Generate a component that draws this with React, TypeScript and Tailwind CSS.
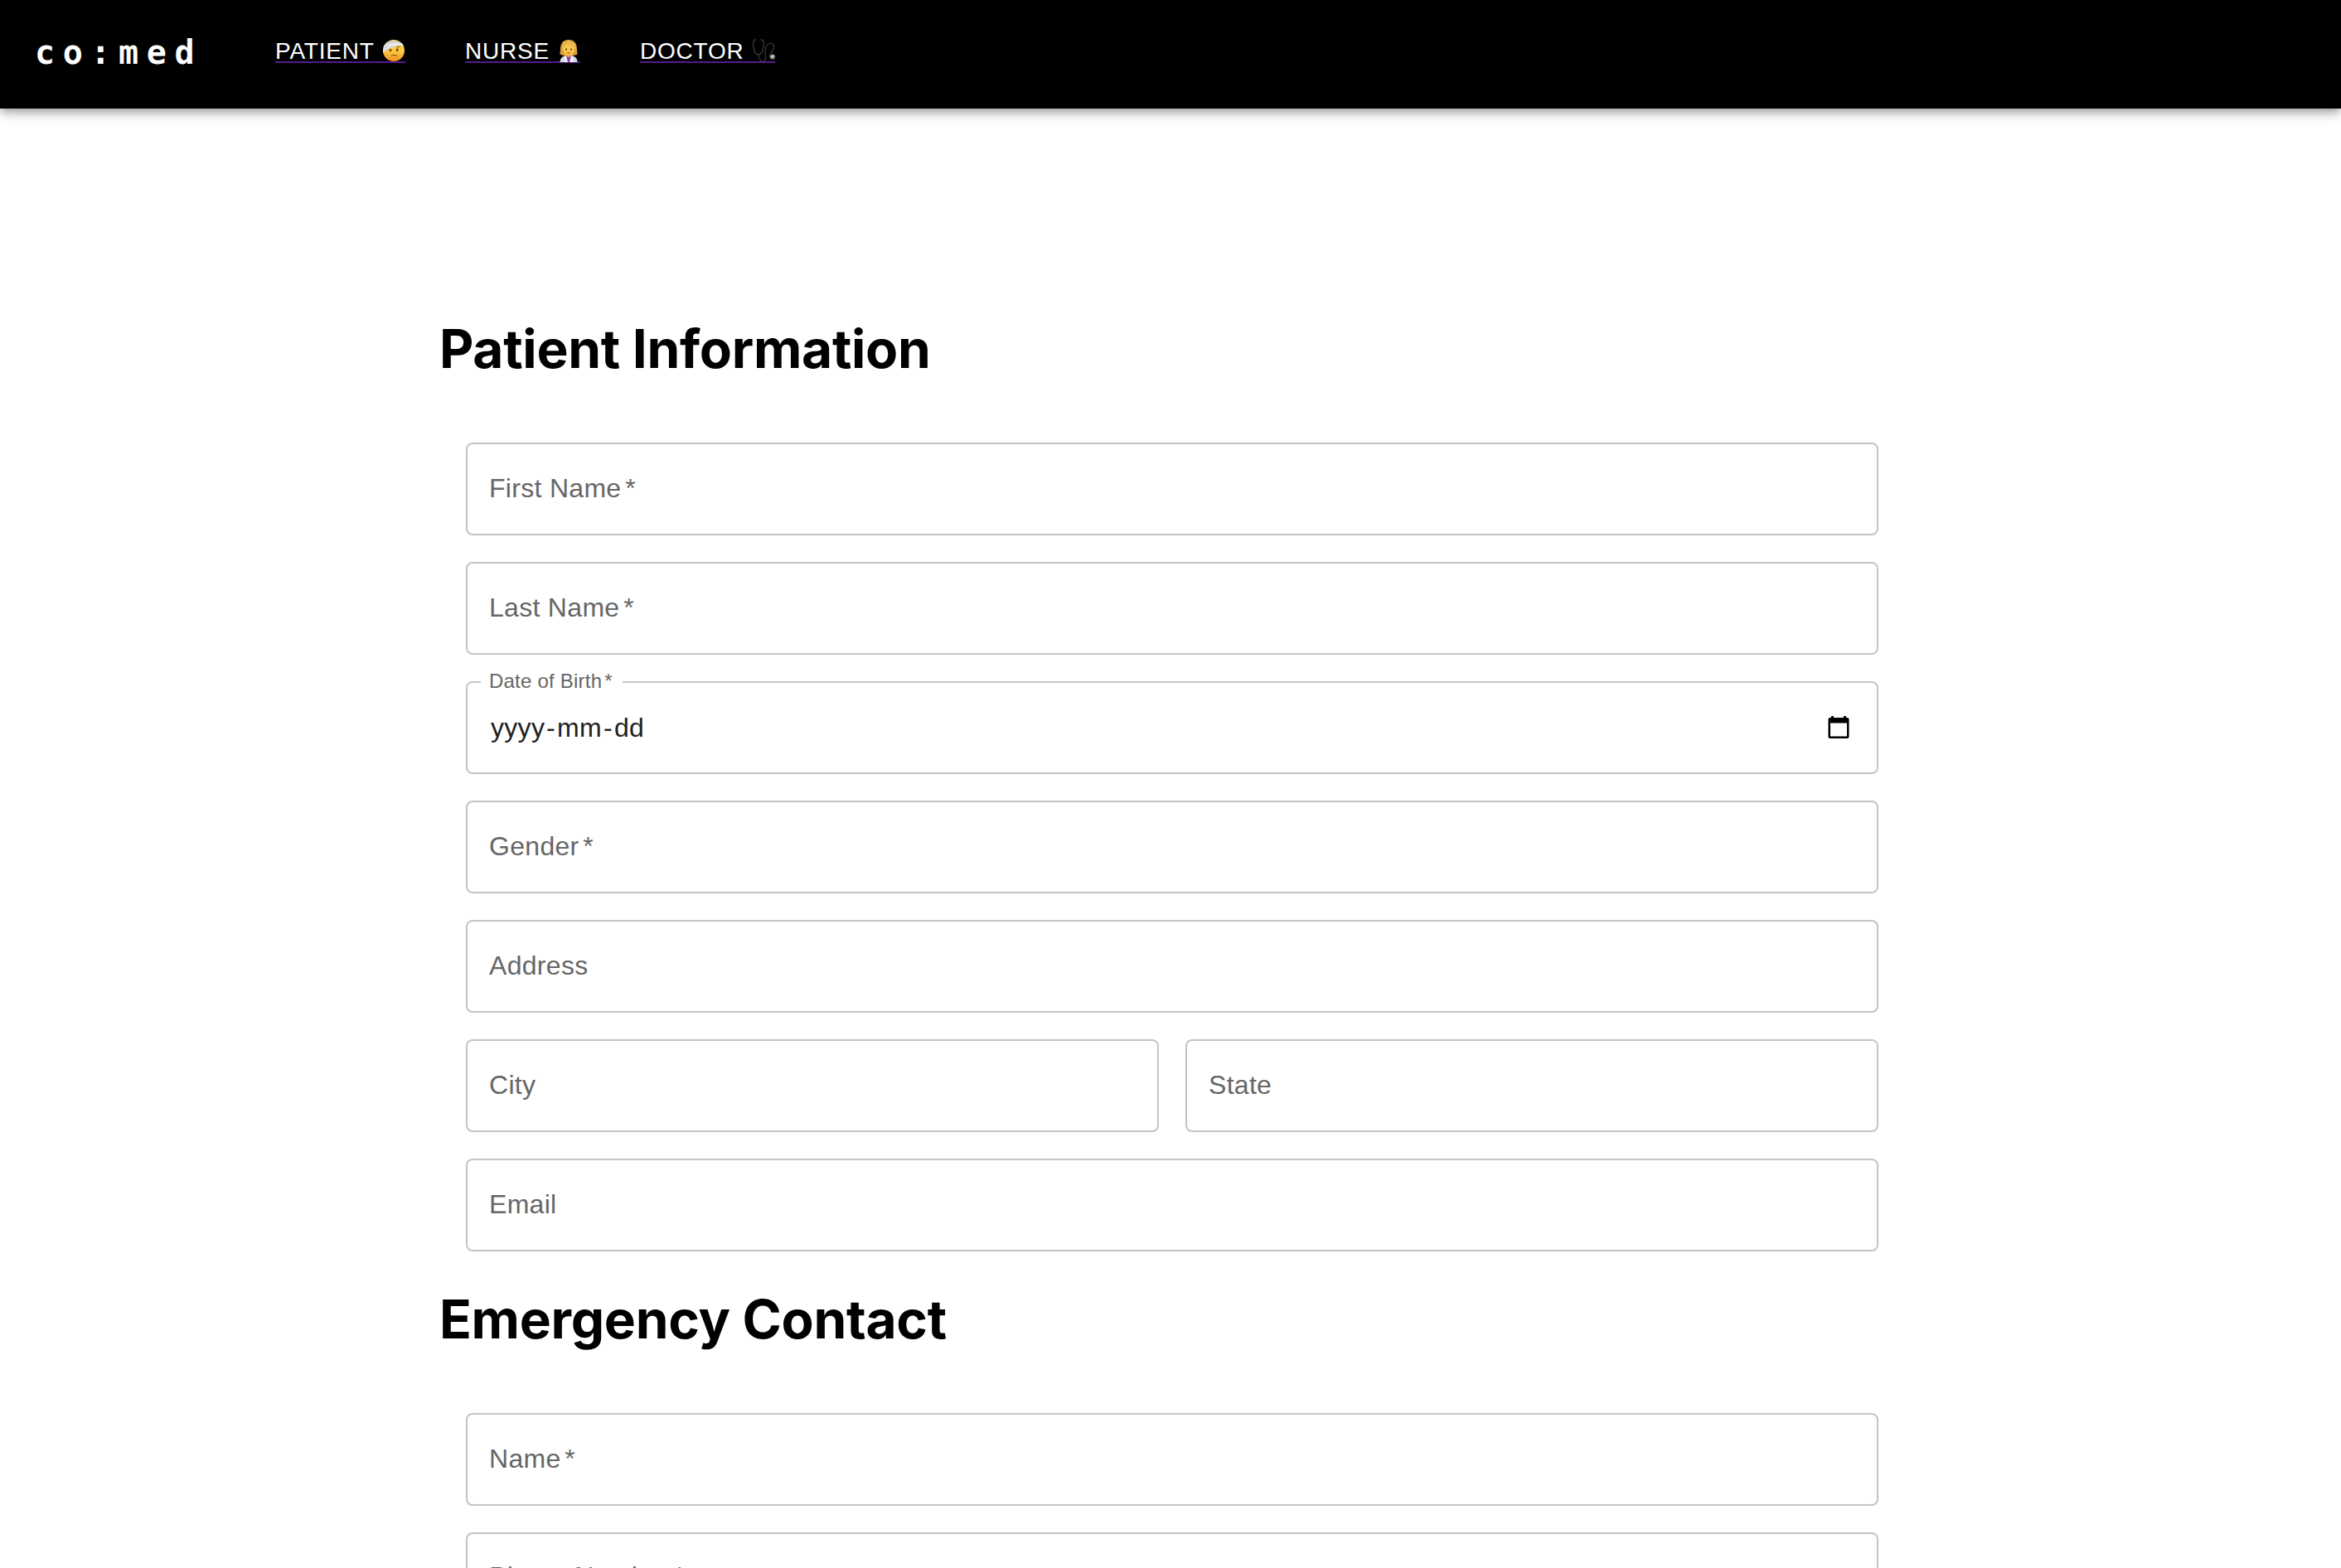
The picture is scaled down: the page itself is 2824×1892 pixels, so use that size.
import React from "react";

function Injured() {
  return (
    <svg viewBox="0 0 28 28" className="block h-7 w-7">
      <defs>
        <linearGradient id="face" x1="0" y1="0" x2="0" y2="1">
          <stop offset="0" stopColor="#ffe04d" />
          <stop offset="0.6" stopColor="#fcc23c" />
          <stop offset="1" stopColor="#ee8f1f" />
        </linearGradient>
        <clipPath id="head">
          <circle cx="14" cy="14" r="13" />
        </clipPath>
      </defs>
      <circle cx="14" cy="14" r="13" fill="url(#face)" />
      <g clipPath="url(#head)">
        <path d="M0 17 L0 6 L4 4 Q14 -1 26 6 L28 9 Q14 6 1 17Z" fill="#cfcfd2" />
        <path d="M2 9.500 Q14 3 27 7.500 M0 15 Q11 6 22 7" stroke="#ececef" strokeWidth="1.8" fill="none" />
      </g>
      <ellipse cx="10" cy="13.6" rx="1.3" ry="1.9" fill="#7a430f" />
      <ellipse cx="18.2" cy="13.2" rx="1.3" ry="1.9" fill="#7a430f" />
      <path d="M17 10.4 Q18.5 8.400 22 9.600" stroke="#8a4c10" strokeWidth="1" fill="none" />
      <path d="M10.8 20.6 Q14 18.4 18 20.4" stroke="#8a4c10" strokeWidth="1.1" fill="none" />
    </svg>
  );
}

function Nurse() {
  return (
    <svg viewBox="0 0 28 28" className="block h-7 w-7">
      <path d="M14 1 C6 1 4 7 4 13 L3.4 18.500 Q8 21 14 20 Q20 21 24.600 18.500 L24 13 C24 7 22 1 14 1Z" fill="#dda036" />
      <path d="M3.500 28 Q3.500 22 9 20.500 L19 20.500 Q24.500 22 24.500 28Z" fill="#d5dae2" />
      <path d="M10.500 20 L17.500 20 L18 28 L10 28Z" fill="#8534b4" />
      <path d="M9 20.500 L11 20 L13 28 L9 28 Z M19 20.500 L17 20 L15 28 L19 28Z" fill="#f1f3f7" />
      <path d="M11.5 17 h5 v3.600 l-2.500 2 l-2.500 -2Z" fill="#e5a338" />
      <path d="M7 11 C7 4 21 4 21 11 C21 16 18 19.600 14 19.600 C10 19.600 7 16 7 11Z" fill="#fbc94c" />
      <path d="M5.500 13 Q8 11 11 7 Q17 7.500 22.500 13 L22 6 L14 1.500 L7 4Z" fill="#eab750" />
      <circle cx="11" cy="12.600" r="1.1" fill="#5b3413" />
      <circle cx="17" cy="12.600" r="1.1" fill="#5b3413" />
      <path d="M11.8 16.400 Q14 17.800 16.2 16.400" stroke="#b4452c" strokeWidth="1" fill="none" />
    </svg>
  );
}

function Stethoscope() {
  return (
    <svg viewBox="0 0 28 28" className="block h-7 w-7 overflow-visible" fill="none" strokeLinecap="round">
      <path d="M4.500 0.800 L3 1.400 C0.500 3 1.500 9 3 14 Q4.500 18.800 8 18.800 Q11.500 18.800 13 14 C14.500 9 15.500 3 13 1.400 L11 0.800" stroke="#3a3a3e" strokeWidth="1.400" />
      <path d="M8 19 C8.500 29 17.500 29 16.500 22 C16 16 15.500 12 18 8 C21 3 27.500 5 26.500 11 C25.500 15 20 18 21.500 22.500 L23 23.500" stroke="#323235" strokeWidth="1.400" />
      <circle cx="25" cy="21.500" r="3" fill="#85888e" />
      <circle cx="24.700" cy="21" r="1.500" fill="#d0d3d8" />
    </svg>
  );
}

function NavLink({ text, icon, className }: { text: string; icon: React.ReactNode; className: string }) {
  return (
    <a className={"flex h-[32px] shrink-0 items-start justify-between border-b-2 border-[#551a8b] font-['Liberation_Sans',Arial,sans-serif] text-[28px] leading-[36px] tracking-[0.8px] text-white " + className}>
      <span className="whitespace-nowrap">{text}</span>
      <span className="pt-[3px]">{icon}</span>
    </a>
  );
}

function Star() {
  return <span className="-ml-0.5">{"\u2009*"}</span>;
}

function Field({ label, required, inset = "pb-[3px]" }: { label: string; required?: boolean; inset?: string }) {
  return (
    <div className={"flex h-28 min-w-0 flex-1 shrink-0 items-center rounded-lg border-2 border-[#c4c4c4] pl-[26px] text-[32px] leading-[46px] tracking-[0.3px] text-[#666666] " + inset}>
      <span className="whitespace-pre">{label}{required && <Star />}</span>
    </div>
  );
}

function Row({ children }: { children: React.ReactNode }) {
  return <div className="flex h-28 shrink-0 gap-8">{children}</div>;
}

function DateField() {
  return (
    <div className="relative flex h-28 flex-1 items-center justify-between rounded-lg border-2 border-[#c4c4c4] pr-[32px] pl-[28px]">
      <span className="absolute -top-[18px] left-[16px] flex h-8 w-[171px] items-center bg-white pl-[10px] text-2xl leading-8 tracking-[0.22px] whitespace-pre text-[#666666]">
        Date of Birth<Star />
      </span>
      <span className="flex text-[32px] leading-[46px] tracking-[0.3px] text-[#212121]">
        <span className="w-[67px]">yyyy</span>
        <span className="w-[13px]">-</span>
        <span className="w-[56px]">mm</span>
        <span className="w-[13px]">-</span>
        <span>dd</span>
      </span>
      <svg viewBox="0 0 28 30" className="mb-px h-[30px] w-7">
        <path fillRule="evenodd" d="M5 1h3v2h12V1h3v2h1.500q2 0 2 2v21q0 2-2 2H3.500q-2 0-2-2V5q0-2 2-2H5zM4 9.500v16h20v-16z" fill="#000" />
      </svg>
    </div>
  );
}

function Heading({ children }: { children: React.ReactNode }) {
  return <h1 className="font-[Inter,sans-serif] text-[64px] leading-[78px] font-bold tracking-[-0.3px] text-black">{children}</h1>;
}

export default function App() {
  return (
    <div className="h-[1892px] w-[2824px] overflow-hidden bg-white font-['Liberation_Sans',Arial,sans-serif]">
      <header className="flex h-[131px] items-start bg-black pt-[44px] pl-[42px] shadow-[0_4px_8px_-2px_rgba(0,0,0,0.2),0_8px_10px_0_rgba(0,0,0,0.14),0_2px_20px_0_rgba(0,0,0,0.12)]">
        <div className="w-[290px] font-['DejaVu_Sans_Mono',monospace] text-[40px] leading-[38px] font-bold tracking-[9.6px] text-white">co:med</div>
        <NavLink text="PATIENT" icon={<Injured />} className="w-[157px]" />
        <NavLink text="NURSE" icon={<Nurse />} className="ml-[72px] w-[139px]" />
        <NavLink text="DOCTOR" icon={<Stethoscope />} className="ml-[72px] w-[163px]" />
      </header>
      <main className="flex flex-col pt-[251px] pr-[558px] pl-[530px]">
        <Heading>Patient Information</Heading>
        <div className="mt-[74px] flex flex-col gap-8 pl-8">
          <Row><Field label="First Name" required /></Row>
          <Row><Field label="Last Name" required /></Row>
          <Row><DateField /></Row>
          <Row><Field label="Gender" required /></Row>
          <Row><Field label="Address" /></Row>
          <Row><Field label="City" /><Field label="State" /></Row>
          <Row><Field label="Email" /></Row>
        </div>
        <div className="mt-[43px]"><Heading>Emergency Contact</Heading></div>
        <div className="mt-[74px] flex flex-col gap-8 pl-8">
          <Row><Field label="Name" required /></Row>
          <Row><Field label="Phone Number" required inset="pb-1.5" /></Row>
        </div>
      </main>
    </div>
  );
}
